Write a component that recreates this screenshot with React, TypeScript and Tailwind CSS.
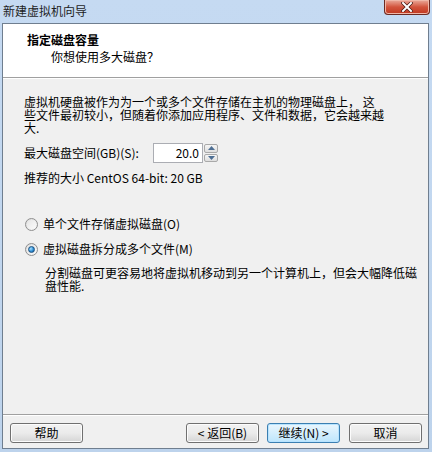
import React from 'react';

const font = { fontFamily: '"Noto Sans CJK SC", "Noto Sans", sans-serif' };

function Radio({ checked }: { checked?: boolean }) {
    return (
        <span className="relative inline-flex h-[13px] w-[13px] shrink-0 items-center justify-center rounded-full border border-[#8f8f8f] bg-gradient-to-br from-[#dcdcdc] to-[#f8f8f8]">
            <span className="h-[9px] w-[9px] rounded-full bg-gradient-to-br from-[#e6e6e6] to-[#fbfbfb]" />
            {checked && (
                <span className="absolute h-[7px] w-[7px] rounded-full border border-[#1c5180] bg-[radial-gradient(circle_at_35%_35%,#a8e0ff,#2f8fd6_55%,#0f4f8a)]" />
            )}
        </span>
    );
}

function Button({ children, primary }: { children: React.ReactNode; primary?: boolean }) {
    return (
        <button
            className={
                primary
                    ? 'h-[20px] w-[73px] rounded-[3px] border border-[#3c7fb1] bg-gradient-to-b from-[#eaf6fd] to-[#bee6fd] text-[12px] leading-none text-black shadow-[inset_0_0_0_1px_#b8e4ff]'
                    : 'h-[20px] w-[73px] rounded-[3px] border border-[#707070] bg-gradient-to-b from-[#f2f2f2] via-[#ebebeb] to-[#d5d5d5] text-[12px] leading-none text-black shadow-[inset_0_0_0_1px_#fcfcfc]'
            }
            style={font}
        >
            {children}
        </button>
    );
}

export default function App() {
    return (
        <div className="flex h-[452px] w-[432px] flex-col bg-gradient-to-b from-[#c5daf2] to-[#bdd3ec] text-black" style={font}>
            {/* title bar */}
            <div className="flex h-[23px] shrink-0 items-start justify-between">
                <div className="pl-[3px] pt-[3px] text-[12px] leading-[16px] text-[#1e1e1e]">新建虚拟机向导</div>
                <div className="mr-[2px] flex h-[15px] w-[46px] items-center justify-center rounded-b-[4px] border border-t-0 border-[#6b2a22] bg-gradient-to-b from-[#e9a99b] via-[#d2533c] to-[#c0371f] shadow-[inset_0_0_0_1px_#f0b7a8]">
                    <svg width="12" height="10" viewBox="0 0 12 10">
                        <path d="M2 1 L10 9 M10 1 L2 9" stroke="#4a1a12" strokeWidth="3.4" strokeLinecap="square" />
                        <path d="M2 1 L10 9 M10 1 L2 9" stroke="#ffffff" strokeWidth="2" strokeLinecap="square" />
                    </svg>
                </div>
            </div>

            {/* client area */}
            <div className="mb-[3px] ml-[2px] mr-[3px] flex flex-1 flex-col border border-[#6f7e8f] bg-[#f0f0f0]">
                <div className="h-[53px] shrink-0 bg-white">
                    <div className="pl-[24px] pt-[8px] text-[12px] font-bold leading-[16px]">指定磁盘容量</div>
                    <div className="mt-[1px] pl-[48px] text-[12px] leading-[16px]">你想使用多大磁盘？</div>
                </div>
                <div className="h-[2px] shrink-0 border-t border-[#a0a0a0] bg-white" />

                <div className="flex flex-1 flex-col whitespace-nowrap px-[21px] text-[12px]">
                    <div className="mt-[16px] leading-[13px]">
                        <div>虚拟机硬盘被作为为一个或多个文件存储在主机的物理磁盘上， 这</div>
                        <div>些文件最初较小，但随着你添加应用程序、文件和数据，它会越来越</div>
                        <div>大.</div>
                    </div>

                    <div className="mt-[9px] flex h-[20px] items-center">
                        <span className="w-[129px]">最大磁盘空间(GB)(S):</span>
                        <div className="flex h-[20px] w-[50px] items-center justify-end border border-[#abadb3] bg-white pr-[3px]">
                            <span>20.0</span>
                        </div>
                        <div className="flex h-[20px] w-[16px] flex-col gap-[1px] p-[1px]">
                            <div className="flex flex-1 items-center justify-center rounded-[2px] border border-[#a9a9a9] bg-gradient-to-b from-[#f6f6f6] to-[#dedede]">
                                <svg width="7" height="4" viewBox="0 0 7 4"><path d="M3.5 0 L7 4 L0 4 Z" fill="#4d6e93" /></svg>
                            </div>
                            <div className="flex flex-1 items-center justify-center rounded-[2px] border border-[#a9a9a9] bg-gradient-to-b from-[#f6f6f6] to-[#dedede]">
                                <svg width="7" height="4" viewBox="0 0 7 4"><path d="M0 0 L7 0 L3.5 4 Z" fill="#4d6e93" /></svg>
                            </div>
                        </div>
                    </div>

                    <div className="mt-[8px] leading-[13px]">推荐的大小 CentOS 64-bit: 20 GB</div>

                    <div className="mt-[32px] flex h-[16px] items-center gap-[5px] pl-[1px]">
                        <Radio />
                        <span>单个文件存储虚拟磁盘(O)</span>
                    </div>
                    <div className="mt-[9px] flex h-[16px] items-center gap-[5px] pl-[1px]">
                        <Radio checked />
                        <span>虚拟磁盘拆分成多个文件(M)</span>
                    </div>
                    <div className="mt-[9px] pl-[21px] leading-[13px]">
                        <div>分割磁盘可更容易地将虚拟机移动到另一个计算机上，但会大幅降低磁</div>
                        <div>盘性能.</div>
                    </div>
                </div>

                {/* footer */}
                <div className="h-[34px] shrink-0 border-t border-[#a0a0a0]">
                    <div className="h-[1px] bg-white" />
                    <div className="flex items-center pl-[7px] pr-[6px] pt-[7px]">
                        <Button>帮助</Button>
                        <div className="flex-1" />
                        <Button>&lt; 返回(B)</Button>
                        <div className="w-[8px]" />
                        <Button primary>继续(N) &gt;</Button>
                        <div className="w-[9px]" />
                        <Button>取消</Button>
                    </div>
                </div>
            </div>
        </div>
    );
}
